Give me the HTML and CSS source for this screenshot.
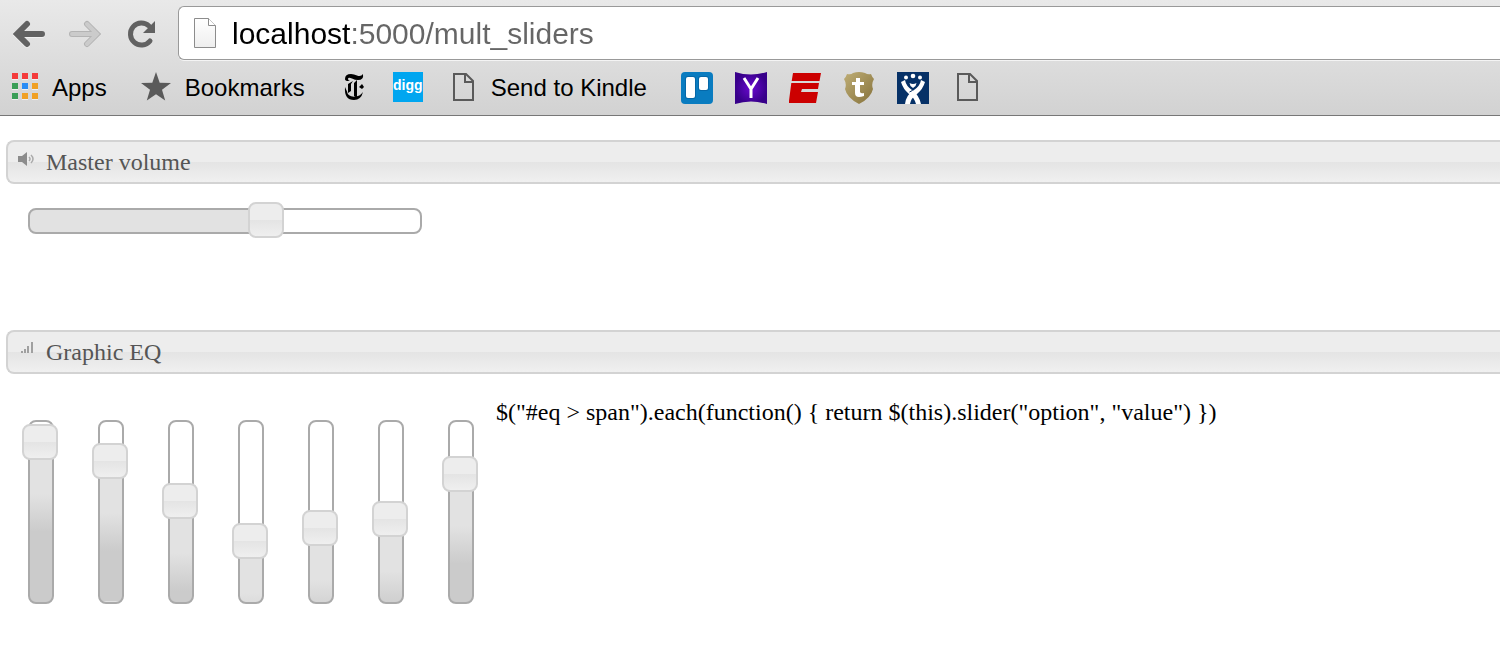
FILE: index.html
```
<!DOCTYPE html>
<html lang="en">
<head>
<meta charset="utf-8">
<title>mult_sliders</title>
<link rel="stylesheet" href="styles.css">
</head>
<body>
<svg width="0" height="0" class="defs" aria-hidden="true">
  <defs>
    <linearGradient id="paper" x1="0" y1="0" x2="0" y2="1"><stop offset="0" stop-color="#fff"/><stop offset="1" stop-color="#eee"/></linearGradient>
    <radialGradient id="violet"><stop offset="0" stop-color="#6a08d0"/><stop offset="1" stop-color="#38008a"/></radialGradient>
    <linearGradient id="gold" x1="0" y1="0" x2="1" y2="1"><stop offset="0" stop-color="#bfae76"/><stop offset="1" stop-color="#85713a"/></linearGradient>
    <symbol id="page" viewBox="0 0 32 32"><path d="M7 2h12l7 7v19H7z M18 2v8h8" fill="none" stroke="#5a5a5a" stroke-width="2"/></symbol>
  </defs>
</svg>
<header class="browser">
  <div class="toolbar">
    <button class="nav" aria-label="Back"><svg width="32" height="32" viewBox="0 0 32 32"><path d="M29 17H5M14 7L4 17l10 10" fill="none" stroke="#fff" stroke-width="6" stroke-linecap="round" opacity=".5" transform="translate(0 1)"/><path d="M29 17H5M14 7L4 17l10 10" fill="none" stroke="#626262" stroke-width="6" stroke-linecap="round"/></svg></button>
    <button class="nav" aria-label="Forward" disabled><svg width="32" height="32" viewBox="0 0 32 32"><path d="M3 17h24M18 7l10 10-10 10" fill="none" stroke="#b4b4b4" stroke-width="6" stroke-linecap="round"/><path d="M3 17h24M18 7l10 10-10 10" fill="none" stroke="#cbcbcb" stroke-width="4" stroke-linecap="round"/></svg></button>
    <button class="nav" aria-label="Reload"><svg width="32" height="32" viewBox="0 0 32 32"><path d="M25 24A11 11 0 1 1 24 9" fill="none" stroke="#626262" stroke-width="5" stroke-linecap="round"/><path d="M30 4v12H18z" fill="#626262"/></svg></button>
    <div class="address">
      <svg width="24" height="32" viewBox="0 0 24 32" aria-hidden="true"><path d="M1.500 1.500h14l7 7v22h-21z" fill="url(#paper)" stroke="#8c8c8c"/><path d="M15.500 1.500v7h7" fill="#fff" stroke="#8c8c8c"/></svg>
      <input class="url" type="text" aria-label="Address" value="localhost:5000/mult_sliders" spellcheck="false">
    </div>
  </div>
  <nav class="bookmarks">
    <a href="#apps"><svg width="32" height="32" viewBox="0 0 32 32"><g fill="#fff" opacity=".6"><path d="M4 2h6v6H4zM14 2h6v6h-6zM24 2h6v6h-6zM4 12h6v6H4zM14 12h6v6h-6zM24 12h6v6h-6zM4 22h6v6H4zM14 22h6v6h-6zM24 22h6v6h-6z"/></g><path d="M4 1h6v6H4zM14 1h6v6h-6zM24 1h6v6h-6z" fill="#f43b3b"/><path d="M4 11h6v6H4zM4 21h6v6H4z" fill="#3a9e57"/><path d="M14 11h6v6h-6z" fill="#2a8cf5"/><path d="M24 11h6v6h-6zM14 21h6v6h-6zM24 21h6v6h-6z" fill="#f0a024"/></svg><span class="label">Apps</span></a>
    <a href="#bookmarks"><svg width="32" height="32" viewBox="0 0 32 32"><path d="M15 0l3.700 10.700 11.300.2-9 6.900 3.200 10.700L15 22.200l-9.200 6.300L9 17.800l-9-6.900 11.300-.2z" fill="#5a5a5a"/></svg><span class="label">Bookmarks</span></a>
    <a href="#nyt" aria-label="New York Times"><svg width="32" height="32" viewBox="0 0 32 32"><path d="M6 7q0-5 6-5 3 0 6 1.500 4 1.500 6-1.500 1 6-5 6-3 0-6-1.500-4-1.500-4 .5 0 1.500 2 2-5 .5-5-2z" fill="#000"/><path d="M14 9l-5 3v9l3-2v-7zM18 8v18l-3-2V11z" fill="#000"/><path d="M23 12l2 3-2 2-3-2zM19 9l5-1M6 15q-1 13 9 13 7 0 9-8-3 4-7 4.500-8 1-9-5z" fill="#000"/></svg></a>
    <a href="#digg"><span class="digg">digg</span></a>
    <a href="#kindle"><svg width="32" height="32"><use href="#page"/></svg><span class="label">Send to Kindle</span></a>
    <a href="#trello" aria-label="Trello"><svg width="32" height="32" viewBox="0 0 32 32"><rect width="32" height="32" rx="4" fill="#0a7cc0"/><rect x="4" y="4" width="11" height="23" rx="3" fill="#0668a8"/><rect x="17" y="4" width="11" height="15" rx="3" fill="#0668a8"/><rect x="5" y="5" width="9" height="21" rx="2" fill="#fff"/><rect x="18" y="5" width="9" height="13" rx="2" fill="#fff"/></svg></a>
    <a href="#yahoo" aria-label="Yahoo"><svg width="32" height="32" viewBox="0 0 32 32"><path d="M0 0q16 5 32 0v32q-16-5-32 0z" fill="url(#violet)"/><path d="M9 6l7 11 7-11M16 16v10" fill="none" stroke="#fff" stroke-width="3"/></svg></a>
    <a href="#espn" aria-label="ESPN"><svg width="32" height="32" viewBox="0 0 32 32"><path d="M4 1h28l-1.500 8H2.700zM2.300 11H30l-1 6H13l-1 3h17l-2 11H-.3z" fill="#c00"/></svg></a>
    <a href="#shield" aria-label="Shield"><svg width="32" height="32" viewBox="0 0 32 32"><path d="M4 2q4 1 6-1 6-2 12 0 3 2 6 1 1 3 3 5-3 5-1 10-2 9-14 15Q4 26 2 17q2-5-1-10 2-2 3-5z" fill="url(#gold)"/><path d="M13 6h4v4h4v3h-4v7q1 2 4 1v3q-9 3-9-3v-8H9v-3h4z" fill="#fff"/></svg></a>
    <a href="#jira" aria-label="Jira"><svg width="32" height="32" viewBox="0 0 32 32"><path d="M0 0h32v32H0z" fill="#063167"/><g fill="#fff"><circle cx="9" cy="5.500" r="2"/><circle cx="16" cy="4" r="2.300"/><circle cx="23" cy="5.500" r="2"/><path d="M12.500 11q3.500 2 7 0l-1 3-2.500 2-2.500-2z"/><path d="M4 10l4-2q1 6 7 10 7 5 9 14h-5q-2-7-7-10Q6 17 4 10z"/><path d="M28 10l-4-2q-1 6-7 10Q9 23 8 32h5q1-6 7-10 6-5 8-12z"/></g><path d="M12.500 20q3-1 4.500-3.500" fill="none" stroke="#063167"/></svg></a>
    <a href="#untitled" aria-label="Untitled"><svg width="32" height="32"><use href="#page"/></svg></a>
  </nav>
</header>
<main>
  <h2 class="bar"><svg width="16" height="16" viewBox="0 0 16 16" aria-hidden="true"><path d="M0 6h4l5-4v14l-5-4H0z" fill="#8c8c8c"/><path d="M11 7q2 2 0 4M13 5q4 4 0 8" fill="none" stroke="#aaa" stroke-width="1.500"/></svg>Master volume</h2>
  <div class="track master"><input type="range" aria-label="Master volume" value="60"></div>
  <h2 class="bar"><svg width="16" height="16" viewBox="0 0 16 16" aria-hidden="true"><path d="M3 11h2v2H3zM6 9h2v4H6zM9 6h2v7H9zM13 2h2v11h-2z" fill="#a0a0a0"/></svg>Graphic EQ</h2>
  <div class="eq">
    <div class="track band" style="--v:88"><input type="range" aria-label="Band 1" value="88"></div>
    <div class="track band" style="--v:77"><input type="range" aria-label="Band 2" value="77"></div>
    <div class="track band" style="--v:55"><input type="range" aria-label="Band 3" value="55"></div>
    <div class="track band" style="--v:33"><input type="range" aria-label="Band 4" value="33"></div>
    <div class="track band" style="--v:40"><input type="range" aria-label="Band 5" value="40"></div>
    <div class="track band" style="--v:45"><input type="range" aria-label="Band 6" value="45"></div>
    <div class="track band" style="--v:70"><input type="range" aria-label="Band 7" value="70"></div>
    <p class="code">$("#eq &gt; span").each(function() { return $(this).slider("option", "value") })</p>
  </div>
</main>
</body>
</html>
```
FILE: styles.css
```
* { box-sizing: border-box; }
body {
  margin: 0;
  background: #fff;
  color: #000;
  font-family: "Liberation Serif", serif;
  font-size: 24px;
  overflow-x: hidden;
}
.defs { display: block; height: 0; }
svg { display: block; flex: none; }

.browser {
  padding-top: 6px;
  background: linear-gradient(#e9e9e9, #d2d2d2);
  border-bottom: 1px solid #777;
  font-family: "Liberation Sans", sans-serif;
}
.toolbar { display: flex; align-items: center; padding-left: 13px; }
.nav {
  margin: 0 24px 0 0;
  padding: 0;
  border: 0;
  background: none;
}
.nav:nth-child(3) { margin-right: 21px; }
.address {
  flex: 1;
  display: flex;
  align-items: center;
  gap: 15px;
  height: 54px;
  padding-left: 14px;
  background: #fff;
  border: 1px solid #999;
  border-right: 0;
  border-radius: 6px 0 0 6px;
  box-shadow: 0 1px 0 #f4f4f4;
}
.url {
  flex: 1;
  min-width: 0;
  height: 46px;
  padding: 2px 0 0;
  border: 0;
  outline: 0;
  font: 30px "Liberation Sans", sans-serif;
  color: transparent;
  background: linear-gradient(90deg, #000 119px, #666 119px);
  -webkit-background-clip: text;
  background-clip: text;
}
.bookmarks {
  display: flex;
  align-items: center;
  gap: 22px;
  height: 55px;
  padding-left: 8px;
}
.bookmarks a {
  display: flex;
  align-items: center;
  gap: 12px;
  color: #000;
  text-decoration: none;
}
.label { padding-right: 12px; white-space: nowrap; line-height: 32px; }
.digg {
  width: 30px;
  height: 30px;
  margin: 0 2px 2px 0;
  background: #00a6f0;
  color: #fff;
  text-align: center;
  font: 700 14px/26px "Liberation Sans", sans-serif;
}

main { padding: 24px 0 24px 6px; }
.bar {
  display: flex;
  align-items: flex-start;
  gap: 12px;
  height: 44px;
  margin: 0;
  padding: 8px 0 0 10px;
  border: 2px solid #d3d3d3;
  border-right: 0;
  border-radius: 8px 0 0 8px;
  background: linear-gradient(#ededed 50%, #e4e4e4 50%, #f0f0f0);
  color: #555;
  font-size: 24px;
  font-weight: 400;
  line-height: 24px;
}
.track {
  border: 2px solid #aaa;
  border-radius: 8px;
  background-color: #fff;
  background-repeat: no-repeat;
}
.master {
  display: flex;
  align-items: center;
  width: 394px;
  height: 26px;
  margin: 24px 0 96px 22px;
  background-image: linear-gradient(90deg, #e2e2e2 60%, #fff 60%);
}
input[type="range"] {
  -webkit-appearance: none;
  appearance: none;
  flex: none;
  margin: 0;
  background: none;
}
input[type="range"]::-webkit-slider-thumb {
  -webkit-appearance: none;
  appearance: none;
  width: 36px;
  height: 36px;
  border: 2px solid #d3d3d3;
  border-radius: 8px;
  background: linear-gradient(#ededed 50%, #e4e4e4 50%, #efefef);
}
.master input { width: 426px; height: 36px; margin: -7px -20px -5px -16px; }
.eq { display: flex; gap: 44px; padding: 46px 0 0 22px; }
.band {
  display: flex;
  justify-content: center;
  flex: none;
  width: 26px;
  height: 184px;
  background-image: linear-gradient(#e2e2e2 50px, #cbcbcb 88px);
  background-size: 100% calc(var(--v) * 1%);
  background-position: bottom;
}
.band input {
  writing-mode: vertical-lr;
  direction: rtl;
  width: 36px;
  height: 216px;
  margin: -20px -6px -16px -8px;
}
.code { margin: -22px 0 0 -22px; line-height: 28px; white-space: nowrap; }
```
